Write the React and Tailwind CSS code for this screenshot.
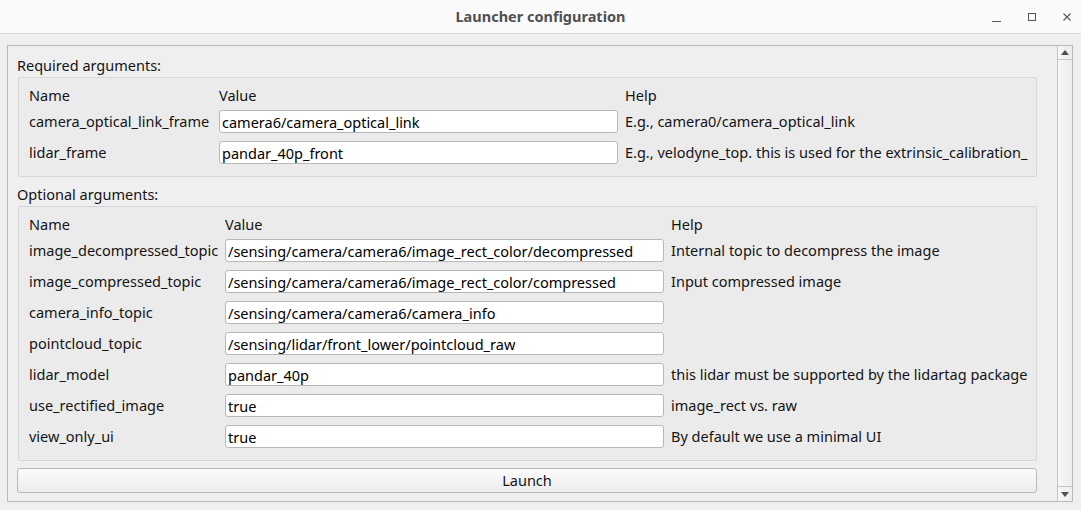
const required = [
  { name: "camera_optical_link_frame", value: "camera6/camera_optical_link", help: "E.g., camera0/camera_optical_link" },
  { name: "lidar_frame", value: "pandar_40p_front", help: "E.g., velodyne_top. this is used for the extrinsic_calibration_" },
];

const optional = [
  { name: "image_decompressed_topic", value: "/sensing/camera/camera6/image_rect_color/decompressed", help: "Internal topic to decompress the image" },
  { name: "image_compressed_topic", value: "/sensing/camera/camera6/image_rect_color/compressed", help: "Input compressed image" },
  { name: "camera_info_topic", value: "/sensing/camera/camera6/camera_info", help: "" },
  { name: "pointcloud_topic", value: "/sensing/lidar/front_lower/pointcloud_raw", help: "" },
  { name: "lidar_model", value: "pandar_40p", help: "this lidar must be supported by the lidartag package" },
  { name: "use_rectified_image", value: "true", help: "image_rect vs. raw" },
  { name: "view_only_ui", value: "true", help: "By default we use a minimal UI" },
];

function ArgGroup({ rows, cols }) {
  return (
    <div className="ml-[1px] w-[1019px] border border-[#d6d6d6] rounded-[2px] bg-[#ebebeb] pt-[8px] pb-[12px] pl-[10px]">
      <div className={`grid ${cols} gap-x-[7px] gap-y-[8px] items-center`}>
        <div className="h-[18px] leading-[18px] mb-[-2px]">Name</div>
        <div className="h-[18px] leading-[18px] mb-[-2px]">Value</div>
        <div className="h-[18px] leading-[18px] mb-[-2px]">Help</div>
        {rows.map((r) => (
          <Row key={r.name} r={r} />
        ))}
      </div>
    </div>
  );
}

function Row({ r }) {
  return (
    <>
      <div className="whitespace-nowrap leading-[23px]">{r.name}</div>
      <input
        readOnly
        value={r.value}
        className="h-[23px] w-full bg-white border border-[#b8b8b8] rounded-[3px] px-[2px] text-[14.5px] text-black outline-none"
      />
      <div className="whitespace-nowrap overflow-hidden leading-[23px] pr-[6px]">{r.help}</div>
    </>
  );
}

export default function App() {
  return (
    <div
      className="w-[1081px] h-[510px] bg-[#efefef] text-[14.5px] text-[#141414] overflow-hidden flex flex-col"
      style={{ fontFamily: '"Noto Sans", "Open Sans", sans-serif' }}
    >
      <div className="h-[34px] shrink-0 bg-[#fafafa] border-b border-[#d4d4d4] relative flex items-center justify-center">
        <span className="font-bold text-[14.5px] text-[#505050]">Launcher configuration</span>
        <div className="absolute right-0 top-0 h-[33px] flex items-center text-[#555]">
          <svg width="12" height="12" viewBox="0 0 12 12" className="mr-[23px]">
            <line x1="1" y1="10.5" x2="10" y2="10.5" stroke="currentColor" strokeWidth="1" />
          </svg>
          <svg width="12" height="12" viewBox="0 0 12 12" className="mr-[23px]">
            <rect x="2.5" y="2.5" width="7" height="7" fill="none" stroke="currentColor" strokeWidth="1" />
          </svg>
          <svg width="12" height="12" viewBox="0 0 12 12" className="mr-[8px]">
            <path d="M2.5 2.5 L9.5 9.5 M9.5 2.5 L2.5 9.5" stroke="currentColor" strokeWidth="1.1" />
          </svg>
        </div>
      </div>

      <div className="mt-[11px] ml-[7px] w-[1066px] h-[457px] border border-[#b9b9b9] flex">
        <div className="flex-1 pl-[9px] pt-[10px]">
          <div className="h-[18px] leading-[18px]">Required arguments:</div>
          <div className="mt-[3px]">
            <ArgGroup rows={required} cols="grid-cols-[183px_399px_1fr]" />
          </div>
          <div className="h-[18px] leading-[18px] mt-[8px]">Optional arguments:</div>
          <div className="mt-[3px]">
            <ArgGroup rows={optional} cols="grid-cols-[189px_439px_1fr]" />
          </div>
          <button className="mt-[7px] w-[1020px] h-[25px] border border-[#b9b9b9] rounded-[3px] bg-gradient-to-b from-[#fbfbfb] to-[#ececec] text-[14.5px] text-[#141414] leading-[23px]">
            Launch
          </button>
        </div>
        <div className="w-[15px] border-l border-[#c4c4c4] bg-gradient-to-r from-[#f7f7f7] to-[#ececec] flex flex-col justify-between">
          <div className="h-[14px] border-b border-[#c4c4c4] flex items-center justify-center">
            <svg width="8" height="5" viewBox="0 0 8 5"><path d="M0 5 L4 0 L8 5 Z" fill="#505050" /></svg>
          </div>
          <div className="h-[15px] border-t border-[#c4c4c4] flex items-center justify-center">
            <svg width="8" height="5" viewBox="0 0 8 5"><path d="M0 0 L4 5 L8 0 Z" fill="#505050" /></svg>
          </div>
        </div>
      </div>
    </div>
  );
}
